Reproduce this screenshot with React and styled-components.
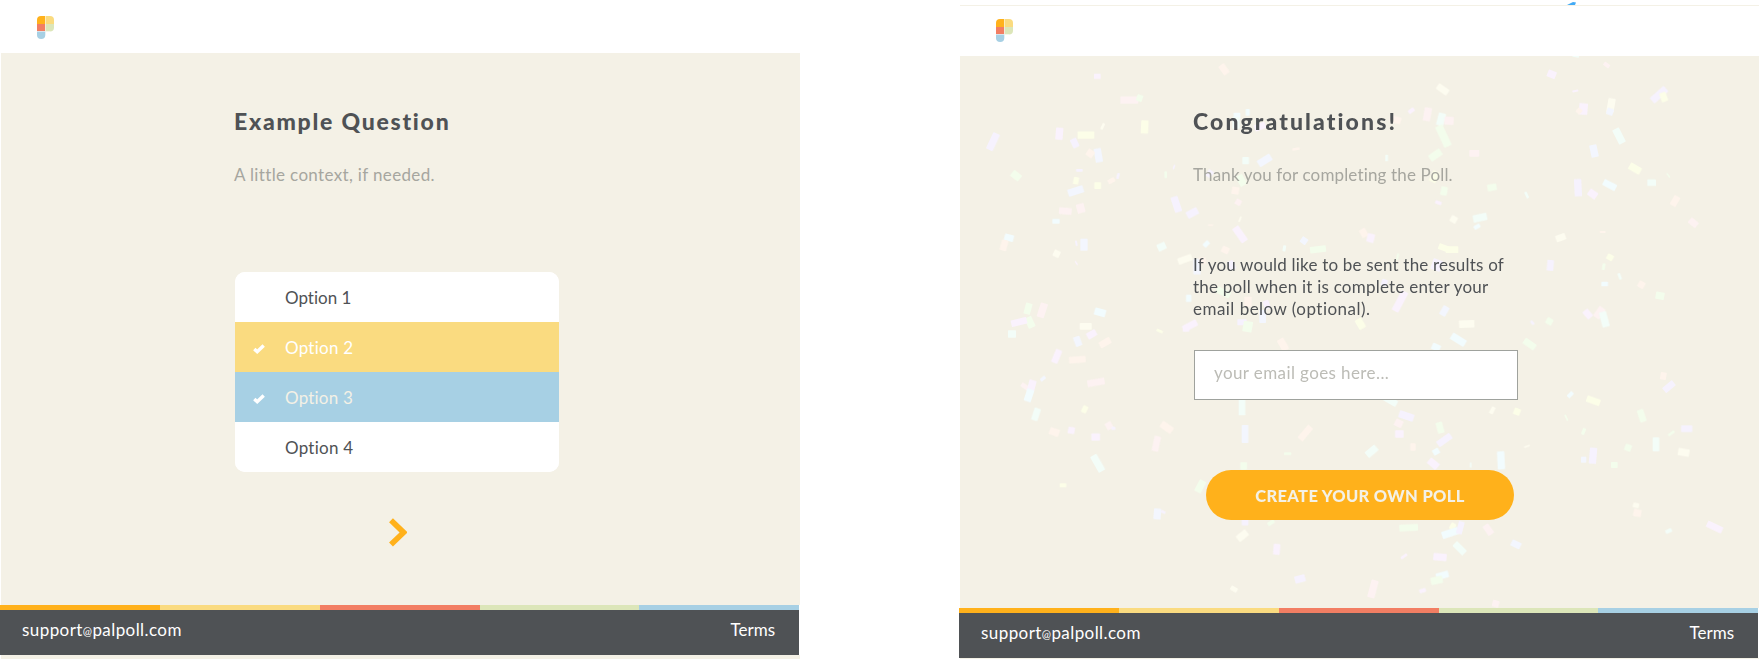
import React from "react";
import styled, { createGlobalStyle } from "styled-components";

const c = {
  sand: "#f4f1e6", ink: "#4f5255", muted: "#a6a69f", orange: "#ffb11b", yellow: "#fadb80",
  red: "#f27e63", green: "#dce6b9", blue: "#a7d0e4",
};

const Global = createGlobalStyle`
  * { box-sizing: border-box; }
  html, body { margin: 0; background: #fff; }
  body { overflow: hidden; font-family: Lato, "Open Sans", sans-serif; font-variant-ligatures: none; }
`;
const Page = styled.div`display: flex; gap: 159px; width: 1759px; height: 659px; overflow: hidden;`;
const Panel = styled.section`display: flex; flex-direction: column; width: 800px; height: 659px;`;
const TopEdge = styled.div`
  height: 6px; margin-left: 1px; border-bottom: 1px solid ${c.sand};
  svg { display: block; margin-left: 606px; }
`;
const Header = styled.header`
  flex: none; height: ${(p) => p.$height}px; padding: ${(p) => p.$top}px 0 0 37px;
  svg { display: block; }
`;
const Body = styled.main`
  position: relative; flex: 1; min-height: 0; margin-left: 1px; padding: ${(p) => p.$top}px 0 0 233px;
  background: ${c.sand};
`;
const Content = styled.div`position: relative; display: flex; flex-direction: column; align-items: flex-start;`;
const Line = styled.span`
  display: block; width: max-content; white-space: pre; letter-spacing: ${(p) => p.$track || 0}px;
`;
const Title = styled.h1`margin: 0; font-size: 23px; line-height: 30px; font-weight: 900; color: ${c.ink};`;
const Subtitle = styled.p`margin: 28px 0 0; font-size: 17px; line-height: 22px; color: ${c.muted};`;
const Note = styled.p`margin: 68px 0 0; font-size: 17px; line-height: 22px; color: ${c.ink};`;
const Options = styled.ul`
  width: 324px; margin: 86px 0 0 1px; padding: 0; list-style: none; border-radius: 10px; overflow: hidden; background: #fff;
`;
const Option = styled.li`
  display: grid; grid-template-columns: 50px 1fr; align-items: center; height: 50px; padding-top: 2px;
  font-size: 17px; line-height: 22px; color: ${(p) => p.$color || c.ink}; background: ${(p) => p.$fill || "#fff"};
  svg { display: block; margin: 1px 0 0 18px; }
`;
const Next = styled.button`
  margin: 46px 0 0 155px; padding: 0; border: 0; background: none; line-height: 0;
`;
const Email = styled.div`
  width: 324px; height: 50px; margin: 30px 0 0 1px; padding: 11px 0 0 19px; border: 1px solid #9fa29d;
  background: #fff; color: #bcbcb6; font-size: 17px; line-height: 22px;
`;
const Cta = styled.button`
  display: flex; align-items: center; justify-content: center; width: 308px; height: 50px; margin: 70px 0 0 13px;
  padding: 2px 0 0; border: 0; border-radius: 25px; background: ${c.orange}; color: ${c.sand};
  font: 900 16.5px/22px Lato, sans-serif;
`;
const Stripes = styled.div`
  display: grid; grid-template-columns: 160px 160px 160px 159px 160px; width: 799px; height: 5px; flex: none;
`;
const Stripe = styled.i`background: ${(p) => p.$color};`;
const Footer = styled.footer`
  display: flex; justify-content: space-between; width: 799px; height: 45px; flex: none; padding: 0 24px 0 22px;
  background: ${c.ink}; color: #fff; font-size: 17px; line-height: 40px;
`;
const At = styled.span`font-size: 11px; line-height: 1; vertical-align: 1px;`;
const Underline = styled.div`flex: none; height: ${(p) => p.$height}px; margin-left: 1px; background: ${c.sand};`;
const ConfettiLayer = styled.svg`position: absolute; inset: 0; width: 799px; height: 552px;`;

const Logo = () => (
  <svg width="17" height="23" viewBox="0 0 17 23">
    <path d="M4 0H8.3V8H0V4Q0 0 4 0Z" fill={c.orange} />
    <path d="M8.3 0H13Q17 0 17 4V8H8.3Z" fill={c.yellow} />
    <path d="M0 8H8.3V15.3H0Z" fill={c.red} />
    <path d="M8.3 8H17V11.5Q17 15.5 13 15.5H8.3Z" fill={c.green} />
    <path d="M0 15.3H8.3V19Q8.3 23 4.2 23Q0 23 0 19Z" fill={c.blue} />
    <path d="M8.5 0V15.5M0 15.5H13" stroke="#fff" strokeOpacity=".4" />
  </svg>
);
const Check = () => (
  <svg width="12" height="10" viewBox="0 0 12 10">
    <path d="M1.3 5 4.2 7.7 10.7 1.5" fill="none" stroke="#fff" strokeWidth="3.4" />
  </svg>
);
const Chevron = () => (
  <svg width="18" height="29" viewBox="0 0 18 29">
    <path d="M2 2.2 14.6 14.4 2 26.6" fill="none" stroke={c.orange} strokeWidth="5.6" />
  </svg>
);

const tones = {
  v: "#f6f2fe", m: "#faf2fd", k: "#fdf2f2", p: "#fef4ec", y: "#fcfee8", w: "#fdfcf0",
  g: "#f3fdec", t: "#f3fdf8", c: "#f2fcfe", b: "#f3f6fe",
};
// Each piece: centre x, centre y, width, height, rotation, tone. One unit is a third of a pixel.
const confetti = [
  { dx: -30, dy: -168, pieces: [
    [442,229,20,16,0,"m"],[538,300,54,22,0,"k"],[569,294,18,20,20,"g"],[822,208,20,32,-35,"p"],[584,381,22,40,3,"y"],
    [129,425,22,54,25,"v"],[328,401,22,36,5,"m"],[408,405,50,22,0,"y"],[374,429,20,28,-25,"v"],[458,379,8,20,25,"w"],
    [445,466,22,42,-10,"b"],[421,460,22,22,35,"p"],[198,527,30,22,38,"g"],[388,511,20,8,0,"v"],[378,542,16,22,10,"y"],
    [443,557,20,20,0,"y"],[484,542,22,14,-30,"p"],[504,528,8,18,15,"v"],[377,573,48,22,-18,"b"],[346,633,38,20,5,"k"],
    [392,625,24,28,-15,"k"],[318,664,22,14,0,"c"],[177,713,28,20,15,"c"],[162,736,20,32,15,"p"],[402,734,22,36,0,"b"],
    [320,761,20,20,25,"w"],[379,730,6,16,-10,"v"],[379,789,4,14,-35,"m"],[635,740,26,22,-25,"t"],[647,524,8,20,0,"g"],
    [672,501,5,14,20,"v"],[679,613,22,48,-18,"v"],[727,639,36,22,-28,"v"],[705,778,44,20,-20,"w"],[769,732,20,14,-45,"c"],
    [870,703,22,52,-35,"m"],[826,750,22,20,25,"p"],[856,572,22,22,10,"p"],[865,607,18,18,30,"k"],[887,482,20,22,0,"t"],
    [944,481,44,22,-32,"b"],[861,348,20,20,0,"c"],[893,337,12,20,0,"c"],[858,369,22,34,0,"t"],[930,380,34,20,-20,"m"],
    [1038,447,22,8,-10,"p"],[779,521,18,22,35,"v"],[874,541,22,34,-30,"g"],[870,658,5,18,20,"w"],[782,675,16,5,0,"p"],
    [1003,745,9,18,10,"t"],[1062,722,20,20,35,"b"],[1104,748,48,20,-7,"g"],[741,800,22,46,0,"b"],[845,796,18,28,-25,"v"],
    [757,782,20,20,0,"p"],[716,895,16,22,0,"c"],[820,877,44,20,25,"g"],[894,905,22,30,0,"p"],[950,914,18,26,-20,"m"],
    [938,949,20,40,0,"b"],[876,967,28,18,0,"v"],[234,926,20,34,15,"g"],[277,931,22,44,18,"k"],[240,967,22,34,-25,"g"],
    [207,966,48,20,-14,"m"],[450,937,34,22,15,"c"],[407,979,36,20,0,"w"],[720,977,46,20,-28,"m"],[893,980,28,32,10,"g"],
  ]},
  { dx: 1170, dy: -168, pieces: [
    [770,195,20,12,35,"k"],[605,223,26,22,22,"m"],[278,268,38,20,35,"w"],[676,273,18,6,-10,"m"],[677,168,20,8,10,"t"],
    [927,284,56,22,-42,"v"],[941,291,20,28,-20,"y"],[783,316,22,42,10,"w"],[780,335,20,20,20,"b"],[700,327,26,34,5,"m"],
    [687,333,16,16,40,"p"],[184,332,20,12,-35,"m"],[232,343,22,40,10,"k"],[273,358,22,38,15,"t"],[297,362,28,24,5,"k"],
    [136,359,34,20,15,"p"],[280,408,24,68,-25,"g"],[256,465,40,22,-35,"g"],[373,460,30,20,0,"k"],[110,474,8,20,0,"t"],
    [732,453,22,38,-12,"b"],[807,408,22,48,-27,"t"],[855,506,38,22,30,"y"],[684,563,22,52,-3,"v"],[728,582,28,22,35,"m"],
    [779,555,42,20,28,"c"],[905,548,26,20,0,"t"],[975,603,20,32,30,"p"],[1030,668,28,20,40,"k"],[955,526,4,16,-40,"g"],
    [426,562,28,20,-10,"g"],[282,573,20,26,10,"g"],[265,608,20,10,20,"m"],[311,658,20,20,30,"w"],[390,653,42,22,-12,"t"],
    [381,680,20,12,-30,"c"],[530,585,8,20,-25,"t"],[253,530,22,34,25,"y"],[41,699,20,26,-30,"p"],[62,714,22,26,15,"m"],
    [283,744,36,18,20,"y"],[306,749,38,20,0,"y"],[632,713,30,20,-20,"w"],[758,696,18,6,0,"p"],[601,796,20,32,5,"v"],
    [780,772,20,18,30,"y"],[761,800,9,20,10,"g"],[809,829,8,20,-20,"t"],[764,852,20,14,0,"c"],[874,854,20,20,30,"p"],
    [930,887,26,22,10,"g"],[150,904,22,66,28,"m"],[103,848,18,20,20,"v"],[283,933,20,30,30,"b"],[31,971,22,32,-30,"y"],
    [350,972,46,22,-2,"w"],[713,942,20,28,-40,"m"],[748,938,22,36,35,"k"],[763,958,22,46,-15,"t"],[598,964,20,20,30,"g"],
    [547,968,8,14,-40,"v"],[260,795,30,34,20,"v"],[143,770,6,20,10,"g"],
  ]},
  { dx: -30, dy: 822, pieces: [
    [186,12,24,22,0,"t"],[383,34,20,30,-20,"b"],[425,13,30,20,-30,"m"],[465,38,36,20,-30,"p"],[320,79,20,42,22,"m"],
    [382,89,50,20,-4,"p"],[438,157,52,20,-10,"k"],[226,170,28,14,35,"k"],[245,168,22,36,15,"m"],[237,196,22,38,18,"c"],
    [279,146,18,10,-40,"b"],[258,253,20,38,18,"t"],[404,238,16,22,25,"y"],[313,306,30,22,20,"p"],[364,301,20,20,10,"m"],
    [437,321,26,22,0,"m"],[477,287,20,22,-30,"k"],[490,295,12,10,0,"v"],[443,400,22,54,-30,"t"],[339,466,20,12,0,"y"],
    [619,341,20,46,12,"k"],[650,292,40,22,35,"p"],[622,552,22,32,5,"b"],[640,546,14,8,25,"v"],[751,469,22,38,28,"g"],
    [881,408,20,22,0,"g"],[885,312,20,54,0,"b"],[876,230,20,52,0,"t"],[1066,309,50,20,-50,"p"],[1013,371,22,8,0,"g"],
    [999,44,22,38,-30,"p"],[877,617,36,22,-38,"w"],[885,576,20,20,0,"v"],[963,578,22,12,-35,"g"],[980,658,20,32,5,"m"],
    [1050,747,32,22,-15,"v"],[852,777,22,14,30,"w"],[708,0,20,10,0,"m"],[629,3,20,8,25,"y"],
  ]},
  { dx: 1170, dy: 822, pieces: [
    [325,29,48,22,32,"c"],[258,52,26,20,25,"c"],[539,42,40,20,35,"g"],[940,138,18,22,10,"p"],[957,170,38,20,-40,"v"],
    [875,257,20,38,-18,"g"],[1010,296,34,20,0,"v"],[964,310,22,8,-35,"g"],[918,343,20,42,0,"t"],[834,353,20,20,20,"g"],
    [1001,367,34,22,10,"w"],[793,405,20,18,0,"g"],[730,212,42,20,20,"y"],[661,194,20,12,-45,"c"],[649,263,5,20,-25,"g"],
    [701,304,10,20,22,"g"],[729,377,22,48,5,"v"],[701,389,16,18,0,"b"],[427,241,12,22,28,"w"],[501,245,20,20,20,"y"],
    [122,212,42,20,30,"t"],[169,258,46,22,18,"v"],[146,280,24,22,25,"k"],[148,312,26,22,0,"m"],[189,351,16,22,0,"p"],
    [270,293,20,34,-15,"g"],[283,330,48,20,-35,"v"],[258,365,20,18,-30,"c"],[250,401,34,22,40,"m"],[65,364,38,22,-40,"t"],
    [453,391,22,54,-3,"c"],[531,349,18,5,-20,"w"],[362,405,5,16,0,"t"],[858,526,18,14,10,"w"],[862,549,24,22,10,"p"],
    [956,603,20,12,-25,"t"],[1094,591,50,20,25,"m"],[498,643,30,20,25,"b"],[415,599,20,34,-35,"k"],[176,593,56,20,-3,"g"],
    [308,589,16,20,30,"y"],[301,609,52,22,-18,"c"],[331,593,18,38,15,"v"],[329,655,42,20,45,"t"],[270,681,40,22,5,"m"],
    [162,679,22,8,-35,"m"],[277,736,38,20,-15,"c"],[260,751,36,22,-12,"g"],[218,782,20,12,-20,"m"],[69,777,22,54,15,"k"],
    [437,821,20,20,15,"k"],
  ]},
];
const Confetti = () => (
  <ConfettiLayer viewBox="0 0 2397 1656" aria-hidden="true">
    <defs><filter id="soft"><feGaussianBlur stdDeviation="2" /></filter></defs>
    <g filter="url(#soft)">
      {confetti.map(({ dx, dy, pieces }, i) => (
        <g key={i} transform={`translate(${dx} ${dy})`}>
          {pieces.map(([x, y, w, h, r, t], j) => (
            <rect key={j} x={x - w / 2} y={y - h / 2} width={w} height={h} rx="2" fill={tones[t]} transform={`rotate(${r} ${x} ${y})`} />
          ))}
        </g>
      ))}
    </g>
  </ConfettiLayer>
);

const PanelFooter = () => (
  <>
    <Stripes>
      {[c.orange, c.yellow, c.red, c.green, c.blue].map((s) => <Stripe key={s} $color={s} />)}
    </Stripes>
    <Footer>
      <Line $track={0.42}>support<At>@</At>palpoll.com</Line>
      <Line>Terms</Line>
    </Footer>
  </>
);

const options = [
  { label: "Option 1", track: 0 },
  { label: "Option 2", track: 0.25, fill: c.yellow, color: "#fff" },
  { label: "Option 3", track: 0.2, fill: c.blue, color: c.sand },
  { label: "Option 4", track: 0.25 },
];

export default function App() {
  return (
    <>
      <Global />
      <Page>
        <Panel>
          <Header $height={53} $top={16}><Logo /></Header>
          <Body $top={53}>
            <Content>
              <Title><Line $track={1.75}>Example Question</Line></Title>
              <Subtitle><Line $track={0.35}>A little context, if needed.</Line></Subtitle>
              <Options>
                {options.map((o) => (
                  <Option key={o.label} $fill={o.fill} $color={o.color}>
                    <span>{o.fill && <Check />}</span>
                    <Line $track={o.track}>{o.label}</Line>
                  </Option>
                ))}
              </Options>
              <Next aria-label="Next"><Chevron /></Next>
            </Content>
          </Body>
          <PanelFooter />
          <Underline $height={4} />
        </Panel>
        <Panel>
          <TopEdge>
            <svg width="12" height="5" viewBox="0 0 12 5"><path d="M1 5 7 2 10 2.5 9 5Z" fill="#42aaf5" /></svg>
          </TopEdge>
          <Header $height={50} $top={13}><Logo /></Header>
          <Body $top={50}>
            <Confetti />
            <Content>
              <Title><Line $track={2.1}>Congratulations!</Line></Title>
              <Subtitle><Line $track={0.15}>Thank you for completing the Poll.</Line></Subtitle>
              <Note>
                <Line $track={0.2}>If you would like to be sent the results of</Line>
                <Line $track={0.23}>the poll when it is complete enter your</Line>
                <Line $track={0.47}>email below (optional).</Line>
              </Note>
              <Email><Line $track={0.4}>your email goes here...</Line></Email>
              <Cta><Line $track={0.33}>CREATE YOUR OWN POLL</Line></Cta>
            </Content>
          </Body>
          <PanelFooter />
          <Underline $height={1} />
        </Panel>
      </Page>
    </>
  );
}
